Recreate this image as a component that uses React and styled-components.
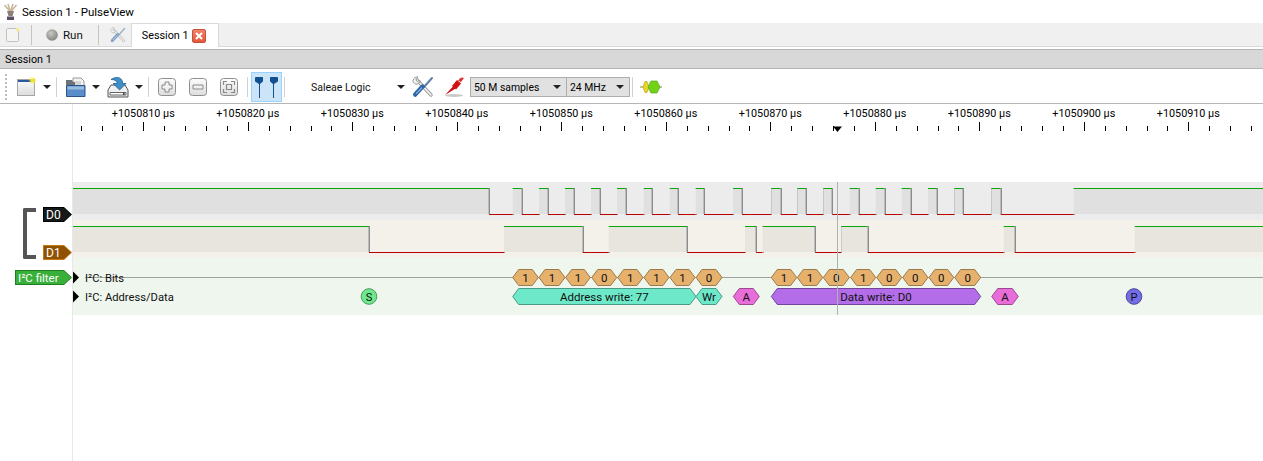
import React from 'react'
import styled, { createGlobalStyle } from 'styled-components'

const FONT = 'Roboto, "Liberation Sans", sans-serif'

const GlobalStyle = createGlobalStyle`
  html, body { margin: 0; padding: 0; background: #fff; overflow: hidden; }
  body { font-family: Roboto, "Liberation Sans", sans-serif; color: #000; }
`

const MAJOR_START = 38.8
const MAJOR_STEP = 104.5
const labels = [1050810, 1050820, 1050830, 1050840, 1050850, 1050860, 1050870, 1050880, 1050890, 1050900, 1050910]

const d0Edges = [489.3, 512.7, 521.7, 539, 548, 565, 574, 591, 600, 617, 626, 643.7, 652, 669.7, 678, 695.7, 704, 733, 742, 771.3, 780.7, 797.3, 806.3, 823.3, 832.3, 849.7, 858.7, 875.7, 884.7, 901.7, 910.7, 928, 937, 954.3, 963.3, 991.3, 1000.7, 1073.7]
const d1Edges = [369, 504, 582.7, 608.7, 687.3, 745, 756.3, 762.5, 815.3, 841.3, 867.7, 1003.7, 1014.7, 1134.7]

const ORANGE = ['#e6b06d', '#9c7a4a']
const TEAL = ['#6de8c8', '#4b9a86']
const PINK = ['#e86dd8', '#9c4a90']
const PURPLE = ['#b36de8', '#72469a']
const GREEN = ['#6de88c', '#4b9a60']
const BLUE = ['#736de8', '#4a469a']

const bits = [
  [512.7, 538.3, '1'], [539, 565, '1'], [565.7, 590.3, '1'], [591.7, 616.7, '0'],
  [617.7, 643, '1'], [644, 669, '1'], [670, 695, '1'], [696, 722, '0'],
  [771.3, 796.7, '1'], [797.3, 822.7, '1'], [823.3, 849.3, '0'], [850.7, 875.7, '1'],
  [876.7, 901.7, '0'], [902.7, 928, '0'], [929, 953.7, '0'], [954.7, 980.7, '0'],
]

const fields = [
  [512.7, 696, 'Address write: 77', TEAL],
  [696, 722, 'Wr', TEAL],
  [733.3, 759.3, 'A', PINK],
  [771.3, 980.7, 'Data write: D0', PURPLE],
  [991.7, 1018.3, 'A', PINK],
]

const App = styled.div`
  display: flex;
  flex-direction: column;
  height: 100vh;
  width: 100%;
  overflow: hidden;
  font-size: 11px;
`

const TitleBar = styled.div`
  display: flex;
  align-items: center;
  height: 23px;
  padding-left: 3px;
  gap: 4px;
  font-size: 11.5px;
  background: #fff;
  flex-shrink: 0;
`

const TabBar = styled.div`
  display: flex;
  align-items: center;
  height: 23px;
  background: #f0f0f0;
  border-bottom: 1px solid #d9d9d9;
  flex-shrink: 0;
`

const BarSep = styled.i`
  display: block;
  width: 1px;
  height: 20px;
  margin-left: ${p => p.$ml}px;
  background: #c4c4c4;
`

const BarIcon = styled.span`
  display: flex;
  align-items: center;
  margin-left: ${p => p.$ml}px;
`

const RunLabel = styled.span`
  margin-left: 5px;
  font-size: 11.5px;
  color: #111;
`

const Tab = styled.div`
  display: flex;
  align-items: center;
  justify-content: space-between;
  align-self: stretch;
  width: 88px;
  height: 24px;
  margin-left: 5px;
  padding: 0 12px 0 10px;
  box-sizing: border-box;
  background: #fff;
  border: 1px solid #d9d9d9;
  border-bottom: 0;
  font-size: 10.8px;
`

const CloseBox = styled.span`
  display: flex;
  align-items: center;
  justify-content: center;
  width: 14px;
  height: 14px;
  box-sizing: border-box;
  border-radius: 2px;
  border: 1px solid #c8523a;
  background: linear-gradient(#f0816a, #e3593f);
`

const SessionBar = styled.div`
  display: flex;
  align-items: center;
  margin-top: 2px;
  height: 17px;
  padding: 1px 0 0 5px;
  box-sizing: content-box;
  background: #d8d8d8;
  border-top: 1px solid #b4b4b4;
  border-bottom: 1px solid #b4b4b4;
  font-size: 10.8px;
  flex-shrink: 0;
`

const Toolbar = styled.div`
  display: flex;
  align-items: center;
  height: 35px;
  box-sizing: border-box;
  padding: 2px 0 0 5px;
  border-bottom: 1px solid #b5b5b5;
  background: #fff;
  flex-shrink: 0;
`

const Grip = styled.i`
  display: block;
  width: 2px;
  height: 26px;
  background: repeating-linear-gradient(#bcbcbc 0 2px, transparent 2px 4px);
`

const ToolSep = styled.i`
  display: block;
  width: 1px;
  height: 20px;
  margin-left: ${p => p.$ml}px;
  background: #d2d2d2;
`

const ToolItem = styled.span`
  display: flex;
  align-items: center;
  justify-content: center;
  flex-shrink: 0;
  width: ${p => p.$w}px;
  margin-left: ${p => p.$ml}px;
`

const DropArrow = styled.i`
  display: block;
  width: 0;
  height: 0;
  margin-left: ${p => p.$ml}px;
  border-left: 4px solid transparent;
  border-right: 4px solid transparent;
  border-top: 4px solid #222;
  flex-shrink: 0;
`

const ToggleButton = styled.span`
  display: flex;
  align-items: center;
  justify-content: center;
  width: 31px;
  height: 30px;
  box-sizing: border-box;
  margin-left: 3px;
  background: #cce4f7;
  border: 1px solid #99d1ff;
`

const DeviceName = styled.span`
  display: block;
  width: 86px;
  margin-left: 26px;
  font-size: 10.5px;
  color: #111;
`

const ComboGroup = styled.div`
  display: flex;
  margin-left: 5px;
  height: 20px;
`

const Combo = styled.div`
  display: flex;
  align-items: center;
  justify-content: space-between;
  width: ${p => p.$w}px;
  box-sizing: border-box;
  padding: 0 5px 0 3px;
  background: #e1e1e1;
  border: 1px solid #adadad;
  margin-left: ${p => p.$first ? 0 : -1}px;
  font-size: 10.4px;
`

const Main = styled.div`
  position: relative;
  flex: 1;
  display: grid;
  grid-template-columns: 73px 1fr;
  grid-template-rows: 78px 38px 38px 57px 1fr;
`

const HeaderCol = styled.div`
  grid-column: 1;
  grid-row: ${p => p.$row};
  border-right: 1px solid #e8e8e8;
`

const GroupHeader = styled(HeaderCol)`
  display: flex;
  align-items: flex-start;
  padding: 25px 0 0 23px;
`

const Bracket = styled.i`
  display: block;
  width: 9px;
  height: 43px;
  margin-top: 1px;
  border: 4px solid #555;
  border-right: 0;
  border-radius: 2px 0 0 2px;
`

const TagColumn = styled.div`
  display: flex;
  flex-direction: column;
  gap: 23px;
  margin-left: 7px;
`

const TagEdge = styled.div`
  width: ${p => p.$w}px;
  height: 15px;
  box-sizing: border-box;
  padding: 1px;
  background: ${p => p.$edge};
  clip-path: polygon(0 0, calc(100% - 8px) 0, 100% 50%, calc(100% - 8px) 100%, 0 100%);
`

const TagFace = styled.div`
  display: flex;
  align-items: center;
  height: 100%;
  box-sizing: border-box;
  padding-left: 2px;
  color: #fff;
  font-size: ${p => p.$size}px;
  white-space: nowrap;
  background: ${p => p.$bg};
  clip-path: polygon(0 0, calc(100% - 7px) 0, 100% 50%, calc(100% - 7px) 100%, 0 100%);
`

const DecoderHeader = styled(HeaderCol)`
  display: flex;
  justify-content: flex-end;
  padding-top: 12px;
`

const RulerCell = styled.div`
  grid-column: 2;
  grid-row: 1;
  overflow: hidden;
`

const Band = styled.div`
  grid-column: 2;
  grid-row: ${p => p.$row};
  background: ${p => p.$bg};
  overflow: hidden;
  svg { display: block; }
`

const CursorLine = styled.i`
  position: absolute;
  left: 837px;
  top: 78px;
  width: 1px;
  height: 133px;
  background: #b0b0b0;
`

// --- icons

const LogoIcon = () => (
  <svg width="15" height="18" viewBox="0 0 15 18">
    <path d="M7.5 9 1.5 2M7.5 9 5 1M7.5 9 10 1M7.5 9l6-7" stroke="#c9b89a" strokeWidth="1.6" />
    <path d="M4 8h7l-1.5 5h-4z" fill="#8a8078" />
    <path d="M4 13.5h7V17H4z" fill="#5d4f63" />
  </svg>
)

const DocFaded = () => (
  <svg width="14" height="15" viewBox="0 0 14 15">
    <rect x="0.5" y="1.5" width="12" height="13" rx="1" fill="#f4f4f2" stroke="#c0c0c0" />
    <circle cx="11.5" cy="2.5" r="2" fill="#f5ec9a" />
  </svg>
)

const RunIcon = () => (
  <svg width="12" height="12" viewBox="0 0 12 12">
    <defs>
      <radialGradient id="run" cx="0.4" cy="0.35" r="0.7">
        <stop offset="0" stopColor="#c8c8c4" />
        <stop offset="1" stopColor="#80807c" />
      </radialGradient>
    </defs>
    <circle cx="6" cy="6" r="5.8" fill="url(#run)" />
  </svg>
)

const Tools = ({ size, faded }) => (
  <svg width={size} height={size} viewBox="0 0 22 22" opacity={faded ? 0.55 : 1}>
    <path d="M5 4 19 19" stroke="#9a9a9a" strokeWidth="3.4" strokeLinecap="round" />
    <path d="M5 4 19 19" stroke="#f4f4f4" strokeWidth="1.6" strokeLinecap="round" />
    <path d="M1 4.5C1.5 2 4 .5 6 1L4 3.6 5.4 5.6 8 4.4C8.2 6.6 6 8.6 3.6 8 2 7.6 1 6 1 4.5Z" fill="#f2f2f2" stroke="#8a8a8a" strokeWidth=".9" />
    <path d="M20 2 12 11" stroke="#5a7fa8" strokeWidth="2" strokeLinecap="round" />
    <path d="M10.6 10.6 3.2 18.6" stroke="#2f66a6" strokeWidth="4.4" strokeLinecap="round" />
    <path d="M9.6 12 4.5 17.4" stroke="#7fb0de" strokeWidth="1.2" strokeLinecap="round" />
  </svg>
)

const NewSessionIcon = () => (
  <svg width="20" height="20" viewBox="0 0 20 20">
    <defs>
      <linearGradient id="pane" x1="0" y1="0" x2="0" y2="1">
        <stop offset="0" stopColor="#fbfbfb" />
        <stop offset="1" stopColor="#dcdcdc" />
      </linearGradient>
    </defs>
    <rect x="1.5" y="2.5" width="17" height="16" fill="url(#pane)" stroke="#a6a6a6" />
    <rect x="2" y="3" width="16" height="2" fill="#2a5b9c" />
    <circle cx="16.5" cy="3.5" r="3.2" fill="#f7ee4a" opacity="0.6" />
    <circle cx="16.5" cy="3.5" r="1.8" fill="#f4e51e" />
  </svg>
)

const FolderIcon = () => (
  <svg width="21" height="21" viewBox="0 0 21 21">
    <path d="M8 1h8l3 3v8H8z" fill="#f2f2f2" stroke="#9a9a9a" />
    <path d="M10 5h6M10 7h6" stroke="#b8b8b8" />
    <path d="M1 3h6l1 2h2v3H1z" fill="#6d7278" />
    <path d="M1.5 8.5h18.5v11H1.5z" fill="#5a8dc9" stroke="#2c5585" />
    <path d="M2.5 9.5h16.5v3H2.5z" fill="#9abde2" />
  </svg>
)

const SaveIcon = () => (
  <svg width="22" height="22" viewBox="0 0 22 22">
    <path d="M1 14 4 9h14l3 5v7H1z" fill="#f0f0f0" stroke="#555" />
    <path d="M3 16.5h16v2.5H3z" fill="#fff" stroke="#666" />
    <path d="M16 16.5h1.6V19H16z" fill="#444" />
    <path d="M4 3.5C8 .5 14 .5 15.5 5.5V7.5H19L12.6 14 6 7.5H10V6.5C9.5 4.5 7 3.5 4 3.5Z" fill="#3f8fc9" stroke="#25608f" strokeWidth=".8" />
  </svg>
)

const RoundBtn = ({ children }) => (
  <svg width="18" height="18" viewBox="0 0 18 18">
    <defs>
      <linearGradient id="btn" x1="0" y1="0" x2="0" y2="1">
        <stop offset="0" stopColor="#fdfdfd" />
        <stop offset="1" stopColor="#dcdcdc" />
      </linearGradient>
    </defs>
    <rect x="0.5" y="0.5" width="17" height="17" rx="3" fill="url(#btn)" stroke="#8f8f8f" />
    {children}
  </svg>
)

const PlusGlyph = () => <path d="M7 4h4v3h3v4h-3v3H7v-3H4V7h3z" fill="#f1f1f1" stroke="#8a8a8a" />
const MinusGlyph = () => <path d="M4 7h10v4H4z" fill="#f1f1f1" stroke="#8a8a8a" />
const FitGlyph = () => (
  <path d="M3.5 7V3.5H7M11 3.5h3.5V7M14.5 11v3.5H11M7 14.5H3.5V11M6.5 6.5h5v5h-5z" fill="none" stroke="#8a8a8a" strokeWidth="1.2" />
)

const CursorsIcon = () => (
  <svg width="23" height="22" viewBox="0 0 23 22">
    <path d="M1 1h6.5a.5.5 0 0 1 .5.5V5a1 1 0 0 1-.4.8L5 8v14H4V8L.4 5.8A1 1 0 0 1 0 5V2a1 1 0 0 1 1-1ZM15.5 1H22a1 1 0 0 1 1 1v3a1 1 0 0 1-.4.8L19 8v14h-1V8l-2.6-2.2A1 1 0 0 1 15 5V1.500a.5.5 0 0 1 .5-.5Z" fill="#13508f" />
  </svg>
)

const ProbeIcon = () => (
  <svg width="21" height="22" viewBox="0 0 21 22">
    <ellipse cx="10" cy="19.5" rx="9" ry="1.4" fill="#c9c9c9" />
    <path d="M1 19 9 10.5 11.5 12.5Z" fill="#c90d0d" />
    <path d="M8 10l5-6 4 3.5-5 6z" fill="#d31111" />
    <path d="M14 4.5 17 1.5l3 .5-3 4z" fill="#e03030" />
  </svg>
)

const DecoderIcon = () => (
  <svg width="22" height="14" viewBox="0 0 22 14">
    <path d="M0 7h22" stroke="#8a8a40" />
    <path d="M3 7 5 1.5h2L9 7 7 12.5H5z" fill="#e8d52a" stroke="#b8a81c" strokeWidth=".7" />
    <path d="M8 7 11 1h6l3 6-3 6h-6z" fill="#72d21a" stroke="#58a812" strokeWidth=".7" />
  </svg>
)

// --- viewport

const Ruler = () => {
  const ticks = []
  for (let i = 0; i < 60; i++) {
    const x = MAJOR_START + i * MAJOR_STEP / 5
    const major = i % 5 === 0
    ticks.push(<path key={i} d={`M${Math.round(x) + 0.5} ${major ? 18 : 22}V27`} stroke="#000" />)
  }
  return (
    <svg width="1190" height="78" viewBox="73 0 1190 78" style={{ display: 'block' }}>
      {labels.map((t, i) => (
        <text key={t} x={MAJOR_START + (i + 1) * MAJOR_STEP} y="13" textAnchor="middle" fontFamily={FONT} fontSize="10.8" fill="#000">
          +{t} µs
        </text>
      ))}
      {ticks}
      <path d="M833 22.5h9L837.5 28Z" fill="#000" />
    </svg>
  )
}

const Trace = ({ edges, high, low, fill }) => {
  let state = true
  let prev = 73
  const parts = []
  const points = [...edges, 1263]
  points.forEach((x, i) => {
    if (state) {
      parts.push(<rect key={`f${i}`} x={prev} y={high} width={x - prev} height={low - high} fill={fill} />)
      parts.push(<path key={`h${i}`} d={`M${prev} ${high + 0.5}H${x}`} stroke="#0aa70a" />)
    } else {
      parts.push(<path key={`l${i}`} d={`M${prev} ${low + 0.5}H${x}`} stroke="#b80000" />)
    }
    if (i < edges.length) {
      const ex = Math.round(x)
      // soft shade on the inner side of each edge
      const shade = state ? ex - 0.5 : ex + 1.5
      parts.push(<path key={`s${i}`} d={`M${shade} ${high + 1}V${low}`} stroke="#bdbdbd" />)
      parts.push(<path key={`e${i}`} d={`M${ex + 0.5} ${high}V${low + 1}`} stroke="#8c8c8c" />)
    }
    prev = x
    state = !state
  })
  return <svg width="1190" height="38" viewBox="73 0 1190 38">{parts}</svg>
}

const Hex = ({ x1, x2, cy, label, colors }) => {
  const s = 6
  const t = 8
  return (
    <g>
      <path
        d={`M${x1} ${cy}L${x1 + s} ${cy - t}H${x2 - s}L${x2} ${cy}L${x2 - s} ${cy + t}H${x1 + s}Z`}
        fill={colors[0]}
        stroke={colors[1]}
      />
      <text x={(x1 + x2) / 2} y={cy + 4} textAnchor="middle" fontFamily={FONT} fontSize="11.5" fill="#111">{label}</text>
    </g>
  )
}

const Dot = ({ cx, cy, label, colors }) => (
  <g>
    <circle cx={cx} cy={cy} r="7.8" fill={colors[0]} stroke={colors[1]} />
    <text x={cx} y={cy + 4} textAnchor="middle" fontFamily={FONT} fontSize="11" fill="#111">{label}</text>
  </g>
)

const DecoderRows = () => (
  <svg width="1190" height="57" viewBox="73 258 1190 57">
    <path d="M85 277.5H1263" stroke="#a0a0a0" />
    <path d="M73 271.5 79 277.5 73 283.5Z" fill="#000" />
    <path d="M73 290.5 79 296.5 73 302.5Z" fill="#000" />
    <text x="85" y="281.5" fontFamily={FONT} fontSize="11.2" fill="#111">I²C: Bits</text>
    <text x="85" y="300.5" fontFamily={FONT} fontSize="11.2" fill="#111">I²C: Address/Data</text>
    {bits.map(([a, b, v]) => <Hex key={a} x1={a} x2={b} cy={277.5} label={v} colors={ORANGE} />)}
    {fields.map(([a, b, v, c]) => <Hex key={a} x1={a} x2={b} cy={296.5} label={v} colors={c} />)}
    <Dot cx={369} cy={296.5} label="S" colors={GREEN} />
    <Dot cx={1134} cy={296.5} label="P" colors={BLUE} />
  </svg>
)

export default function PulseView() {
  return (
    <>
      <GlobalStyle />
      <App>
        <TitleBar>
          <LogoIcon />
          <span>Session 1 - PulseView</span>
        </TitleBar>

        <TabBar>
          <BarIcon $ml={6}><DocFaded /></BarIcon>
          <BarSep $ml={11} />
          <BarIcon $ml={14}><RunIcon /></BarIcon>
          <RunLabel>Run</RunLabel>
          <BarSep $ml={15} />
          <BarIcon $ml={11}><Tools size={16} faded /></BarIcon>
          <Tab>
            Session 1
            <CloseBox>
              <svg width="8" height="8" viewBox="0 0 8 8">
                <path d="M1 1l6 6M7 1 1 7" stroke="#fff" strokeWidth="2" />
              </svg>
            </CloseBox>
          </Tab>
        </TabBar>

        <SessionBar>Session 1</SessionBar>

        <Toolbar>
          <Grip />
          <ToolItem $w={20} $ml={9}><NewSessionIcon /></ToolItem>
          <DropArrow $ml={7} />
          <ToolSep $ml={5} />
          <ToolItem $w={21} $ml={8}><FolderIcon /></ToolItem>
          <DropArrow $ml={6} />
          <ToolItem $w={22} $ml={7}><SaveIcon /></ToolItem>
          <DropArrow $ml={6} />
          <ToolSep $ml={5} />
          <ToolItem $w={18} $ml={9}><RoundBtn><PlusGlyph /></RoundBtn></ToolItem>
          <ToolItem $w={18} $ml={13}><RoundBtn><MinusGlyph /></RoundBtn></ToolItem>
          <ToolItem $w={18} $ml={13}><RoundBtn><FitGlyph /></RoundBtn></ToolItem>
          <ToolSep $ml={9} />
          <ToggleButton><CursorsIcon /></ToggleButton>
          <ToolSep $ml={2} />
          <DeviceName>Saleae Logic</DeviceName>
          <DropArrow $ml={0} />
          <ToolItem $w={22} $ml={7}><Tools size={22} /></ToolItem>
          <ToolItem $w={21} $ml={10}><ProbeIcon /></ToolItem>
          <ComboGroup>
            <Combo $w={97} $first>50 M samples<DropArrow $ml={0} /></Combo>
            <Combo $w={64}>24 MHz<DropArrow $ml={0} /></Combo>
          </ComboGroup>
          <ToolSep $ml={2} />
          <ToolItem $w={22} $ml={7}><DecoderIcon /></ToolItem>
        </Toolbar>

        <Main>
          <HeaderCol $row="1" />
          <RulerCell><Ruler /></RulerCell>

          <GroupHeader $row="2 / span 2">
            <Bracket />
            <TagColumn>
              <TagEdge $w={29} $edge="#000"><TagFace $bg="#16191a" $size={12}>D0</TagFace></TagEdge>
              <TagEdge $w={29} $edge="#c17d11"><TagFace $bg="#8f5202" $size={12}>D1</TagFace></TagEdge>
            </TagColumn>
          </GroupHeader>
          <Band $row="2" $bg="#ececec">
            <Trace edges={d0Edges} high={6} low={32} fill="#e0e0e0" />
          </Band>
          <Band $row="3" $bg="#f4f0ea">
            <Trace edges={d1Edges} high={6} low={32} fill="#e8e5de" />
          </Band>

          <DecoderHeader $row="4">
            <TagEdge $w={57} $edge="#1f7d22"><TagFace $bg="#38b03a" $size={11.5}>I²C filter</TagFace></TagEdge>
          </DecoderHeader>
          <Band $row="4" $bg="#eef6ee"><DecoderRows /></Band>

          <HeaderCol $row="5" />
          <CursorLine />
        </Main>
      </App>
    </>
  )
}
